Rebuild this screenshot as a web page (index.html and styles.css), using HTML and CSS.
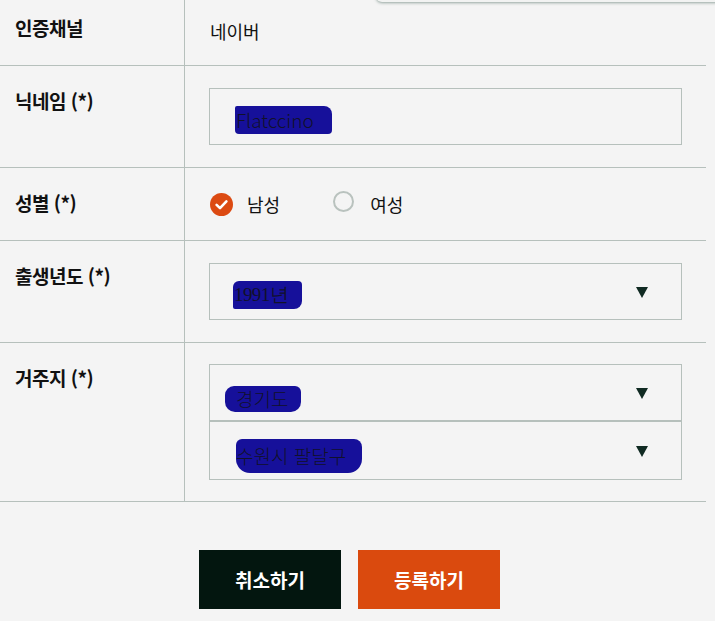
FILE: index.html
```html
<!DOCTYPE html>
<html lang="ko">
<head>
<meta charset="utf-8">
<link rel="stylesheet" href="styles.css">
</head>
<body>
<div class="top-shadow"></div>
<div class="form">
  <div class="row row-first">
    <div class="label">인증채널</div>
    <div class="value plain">네이버</div>
  </div>
  <div class="row">
    <div class="label">닉네임 (*)</div>
    <div class="value">
      <div class="box"><span class="mark mark-a">Flatccino</span></div>
    </div>
  </div>
  <div class="row row-radio">
    <div class="label">성별 (*)</div>
    <div class="value radios">
      <span class="radio">
        <svg class="radio-on" width="23" height="23" viewBox="0 0 23 23"><circle cx="11.5" cy="11.5" r="11.5" fill="#dc4a12"/><path d="M6.6 11.9 L10 15.1 L16.4 8.4" fill="none" stroke="#fff" stroke-width="2.6" stroke-linecap="round" stroke-linejoin="round"/></svg>
        <span>남성</span>
      </span>
      <span class="radio radio-second">
        <span class="radio-off"></span>
        <span>여성</span>
      </span>
    </div>
  </div>
  <div class="row">
    <div class="label">출생년도 (*)</div>
    <div class="value">
      <div class="box select"><span class="mark mark-b">1991년</span><span class="arrow"></span></div>
    </div>
  </div>
  <div class="row row-address">
    <div class="label">거주지 (*)</div>
    <div class="value">
      <div class="box select"><span class="mark mark-c">경기도</span><span class="arrow"></span></div>
      <div class="box select second"><span class="mark mark-d">수원시 팔달구</span><span class="arrow"></span></div>
    </div>
  </div>
</div>
<div class="actions">
  <button class="btn btn-cancel">취소하기</button>
  <button class="btn btn-submit">등록하기</button>
</div>
</body>
</html>
```

FILE: styles.css
```css
html, body {
  margin: 0;
  padding: 0;
  background: #f4f4f4;
}
body {
  position: relative;
  width: 715px;
  height: 621px;
  overflow: hidden;
  font-family: "Noto Sans CJK KR", "Noto Sans", sans-serif;
  color: #111;
}
.top-shadow {
  position: absolute;
  top: -20px;
  left: 376px;
  right: -10px;
  height: 22px;
  background: #f2f3f2;
  border-bottom-left-radius: 6px;
  box-shadow: 0 1px 3px rgba(70, 100, 90, 0.55);
}
.form {
  width: 706px;
}
.row {
  display: grid;
  grid-template-columns: 185px 1fr;
  border-bottom: 1px solid #b6c0bc;
}
.label {
  border-right: 1px solid #b6c0bc;
  padding: 22px 0 0 15px;
  font-size: 19px;
  line-height: 26px;
  font-weight: 700;
  letter-spacing: -0.5px;
  color: #111;
}
.value {
  padding: 22px 24px 22px 24px;
  font-size: 18px;
  line-height: 26px;
}
.row-first {
  height: 65px;
}
.row-first .label {
  padding-top: 15px;
}
.row-first .value {
  padding-top: 18px;
  padding-left: 25px;
  letter-spacing: -0.1px;
}
.box {
  position: relative;
  height: 55px;
  border: 1px solid #b6c0bc;
  display: flex;
  align-items: center;
  padding-left: 24px;
  font-size: 19px;
  font-weight: 300;
  color: #1a1a2a;
}
.row-address .value {
  padding-top: 21px;
  padding-bottom: 21px;
}
.select.second {
  height: 57px;
}
.mark {
  background: #16109a;
  color: #11112a;
  line-height: 22px;
}
.mark-a {
  margin-left: 1px;
  margin-top: 6px;
  padding: 3px 18px 3px 1px;
  border-radius: 2px 8px 4px 4px;
}
.mark-b {
  margin-left: -1px;
  margin-top: 6px;
  padding: 3px 14px 3px 1px;
  border-radius: 6px 4px 8px 2px;
  font-family: "Liberation Serif", serif;
  font-size: 19px;
  letter-spacing: -0.6px;
}
.mark-c {
  margin-left: -9px;
  margin-top: 12px;
  padding: 2px 13px 2px 11px;
  border-radius: 9px 6px 10px 10px;
}
.mark-d {
  margin-left: 2px;
  margin-top: 11px;
  padding: 6px 16px 6px 0;
  border-radius: 6px 8px 14px 14px;
}
.arrow {
  position: absolute;
  right: 33px;
  top: 50%;
  margin-top: -5px;
  width: 0;
  height: 0;
  border-left: 6px solid transparent;
  border-right: 6px solid transparent;
  border-top: 11px solid #102a22;
}
.row-radio .value {
  height: 72px;
  box-sizing: border-box;
  padding: 0 24px 0 25px;
}
.radios {
  display: flex;
  align-items: center;
  gap: 53px;
}
.radio {
  display: inline-flex;
  align-items: center;
  gap: 14px;
}
.radio-on {
  display: block;
}
.radio-off {
  display: inline-block;
  box-sizing: border-box;
  width: 21px;
  height: 21px;
  border: 2px solid #b9c2be;
  border-radius: 50%;
  margin-top: -5px;
}
.radio-second {
  gap: 16px;
}
.actions {
  display: flex;
  gap: 17px;
  padding: 48px 0 0 199px;
}
.btn {
  width: 142px;
  height: 59px;
  border: none;
  font-family: "Noto Sans CJK KR", "Noto Sans", sans-serif;
  font-size: 19px;
  font-weight: 700;
  color: #fff;
  padding: 0;
}
.btn-cancel {
  background: #03160f;
}
.btn-submit {
  background: #da4a0e;
}
```
